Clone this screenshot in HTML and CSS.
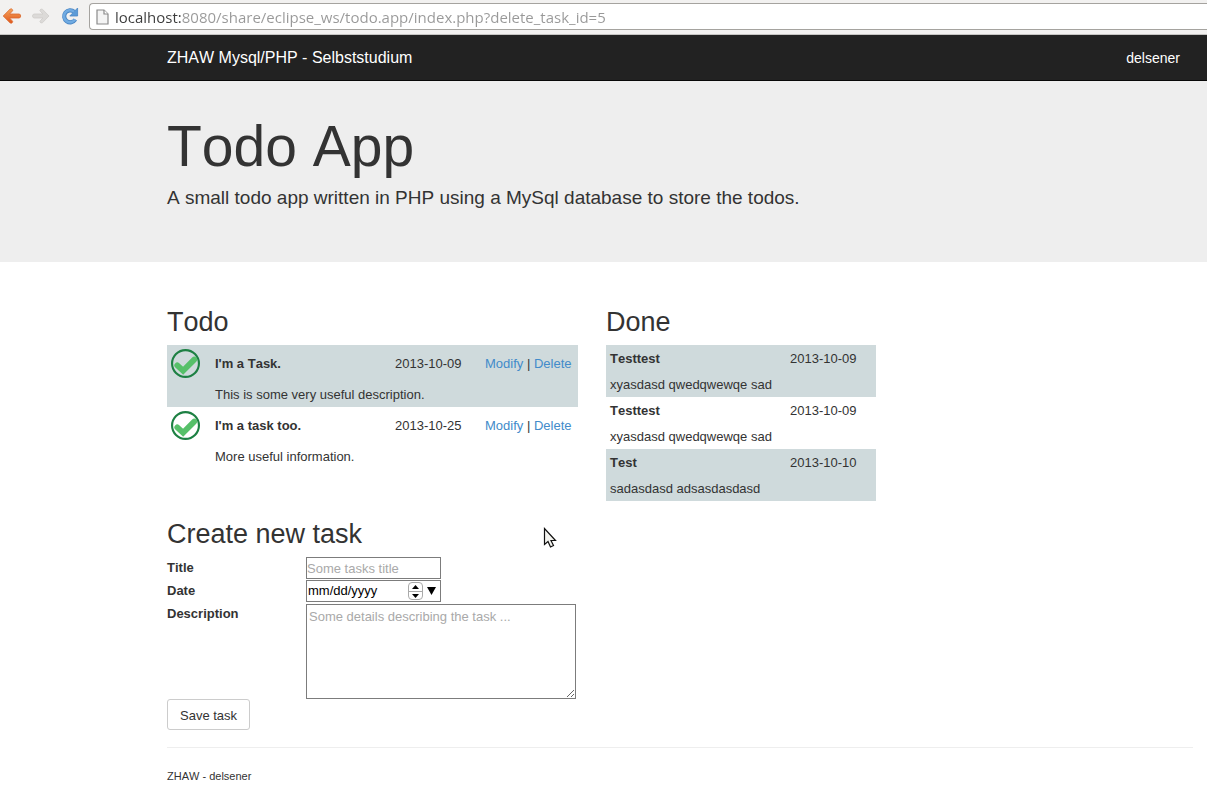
FILE: index.html
```html
<!DOCTYPE html>
<html lang="en">
<head>
<meta charset="utf-8">
<title>Todo App</title>
<link rel="stylesheet" href="styles.css">
</head>
<body>
<div class="toolbar">
  <button class="tool" type="button" aria-label="Back">
    <svg width="20" height="18" viewBox="0 0 20 18"><defs><linearGradient id="orange" x1="0" y1="0" x2="0" y2="1"><stop offset="0" stop-color="#f5a55c"/><stop offset="1" stop-color="#e0561b"/></linearGradient></defs><path d="M8.200 2 1.200 9l7 7q1.700.6 2.400-.8.300-.7-.3-1.300L7.600 11h9.400q1.700-.2 1.700-2t-1.700-2H7.600l2.700-2.900q.6-.6.3-1.300Q9.900 1.400 8.200 2z" fill="url(#orange)" stroke="#d9682d" stroke-width=".8"/></svg>
  </button>
  <button class="tool" type="button" aria-label="Forward">
    <svg width="20" height="18" viewBox="0 0 20 18"><path d="M11.400 2.200 18 9l-6.600 6.800q-1.700.6-2.400-.8-.3-.7.3-1.300L12 11H3.200Q1.500 10.800 1.500 9t1.700-2H12L9.300 4.300Q8.700 3.700 9 3q.7-1.400 2.400-.8z" fill="#dcdad8" stroke="#cfcdca" stroke-width=".8"/></svg>
  </button>
  <button class="tool" type="button" aria-label="Reload">
    <svg width="20" height="18" viewBox="0 0 20 18"><path d="M14.200 4.800A6 6 0 1 0 15.300 12.500" fill="none" stroke="#4a86c4" stroke-width="4.200"/><path d="M17.600 1v8H9.800z" fill="#5b9bd8" stroke="#4a86c4" stroke-width=".8" stroke-linejoin="round"/><path d="M14 4.800A6 6 0 1 0 15.100 12.400" fill="none" stroke="#70abe2" stroke-width="2.600"/></svg>
  </button>
  <div class="address">
    <svg width="13" height="16" viewBox="0 0 13 16"><path d="M1 1h7l4 4v10H1z" fill="#f4f4f4" stroke="#8a8a8a" stroke-width="1.200"/><path d="M8 1v4h4" fill="#fff" stroke="#8a8a8a" stroke-width="1.200"/></svg>
    <input class="url" type="text" aria-label="Address" value="localhost:8080/share/eclipse_ws/todo.app/index.php?delete_task_id=5">
  </div>
</div>
<nav class="navbar">
  <a class="brand" href="#">ZHAW Mysql/PHP - Selbststudium</a>
  <a class="user" href="#">delsener</a>
</nav>
<header class="jumbotron">
  <h1>Todo App</h1>
  <p>A small todo app written in PHP using a MySql database to store the todos.</p>
</header>
<main class="container">
  <div class="lists">
    <section>
      <h2>Todo</h2>
      <table class="tasks open">
        <tbody class="shaded">
          <tr>
            <td class="state"><button class="tick" type="button" aria-label="Mark as done"><svg width="29" height="29" viewBox="0 0 30 30"><circle cx="15" cy="15" r="13.900" fill="none" stroke="#1d8043" stroke-width="2.200"/><path d="M6.500 17l6 5.500L24 11" fill="none" stroke="#56c069" stroke-width="6" stroke-linecap="round"/></svg></button></td>
            <th class="title">I'm a Task.</th>
            <td class="date">2013-10-09</td>
            <td class="actions"><a href="#">Modify</a> | <a href="#">Delete</a></td>
          </tr>
          <tr><td></td><td colspan="3">This is some very useful description.</td></tr>
        </tbody>
        <tbody>
          <tr>
            <td class="state"><button class="tick" type="button" aria-label="Mark as done"><svg width="29" height="29" viewBox="0 0 30 30"><circle cx="15" cy="15" r="13.900" fill="none" stroke="#1d8043" stroke-width="2.200"/><path d="M6.500 17l6 5.500L24 11" fill="none" stroke="#56c069" stroke-width="6" stroke-linecap="round"/></svg></button></td>
            <th class="title">I'm a task too.</th>
            <td class="date">2013-10-25</td>
            <td class="actions"><a href="#">Modify</a> | <a href="#">Delete</a></td>
          </tr>
          <tr><td></td><td colspan="3">More useful information.</td></tr>
        </tbody>
      </table>
    </section>
    <section>
      <h2>Done</h2>
      <table class="tasks">
        <tbody class="shaded">
          <tr><th class="title">Testtest</th><td class="date">2013-10-09</td></tr>
          <tr><td colspan="2">xyasdasd qwedqwewqe sad</td></tr>
        </tbody>
        <tbody>
          <tr><th class="title">Testtest</th><td class="date">2013-10-09</td></tr>
          <tr><td colspan="2">xyasdasd qwedqwewqe sad</td></tr>
        </tbody>
        <tbody class="shaded">
          <tr><th class="title">Test</th><td class="date">2013-10-10</td></tr>
          <tr><td colspan="2">sadasdasd adsasdasdasd</td></tr>
        </tbody>
      </table>
    </section>
  </div>
  <section class="create">
    <h2>Create new task</h2>
    <form>
      <div class="fields">
        <label for="title">Title</label>
        <input class="box" id="title" type="text" placeholder="Some tasks title">
        <label for="date">Date</label>
        <div class="box datebox">
          <input id="date" type="text" value="mm/dd/yyyy">
          <span class="stepper">
            <button type="button" aria-label="Increase"><svg width="7" height="4" viewBox="0 0 7 4"><path d="M0 4 3.500 0 7 4z"/></svg></button>
            <button type="button" aria-label="Decrease"><svg width="7" height="4" viewBox="0 0 7 4"><path d="M0 0 3.500 4 7 0z"/></svg></button>
          </span>
          <button class="open-calendar" type="button" aria-label="Open calendar"><svg width="9" height="8" viewBox="0 0 9 8"><path d="M0 0h9L4.500 8z"/></svg></button>
        </div>
        <label for="description">Description</label>
        <textarea class="box" id="description" placeholder="Some details describing the task ..."></textarea>
      </div>
      <button class="save" type="button">Save task</button>
    </form>
  </section>
  <footer class="footer">ZHAW - delsener</footer>
</main>
<svg class="pointer" width="14" height="22" viewBox="0 0 14 22"><path d="M1.500 1.500v16l3.500-3 2.500 5.500 3-1.500L8 13.500h4.500z" fill="#f4f4f0" stroke="#111" stroke-width="1.200"/></svg>
</body>
</html>
```

FILE: styles.css
```css
* { box-sizing: border-box; }
body {
  margin: 0;
  background: #fff;
  color: #333;
  font: 13px/18px "Liberation Sans", Arial, sans-serif;
  font-kerning: none;
}
button { padding: 0; border: 0; background: none; font: inherit; color: inherit; }
svg { display: block; }
a { color: #428bca; text-decoration: none; }
h1, h2 { margin: 0; font-weight: 400; }

.toolbar {
  display: flex;
  align-items: center;
  gap: 9px;
  height: 35px;
  padding: 0 0 3px 2px;
  background: #f2f1f0;
  border-bottom: 1px solid #c6c5c3;
}
.address {
  flex: 1;
  display: flex;
  align-items: center;
  gap: 6px;
  height: 27px;
  margin-top: 2px;
  padding-left: 6px;
  background: #fff;
  border: 1px solid #a5a39f;
  border-right: 0;
  border-radius: 4px 0 0 4px;
}
.url {
  flex: 1;
  padding: 0;
  border: 0;
  outline: 0;
  font: 15px/20px "Open Sans", "Noto Sans", sans-serif;
  color: transparent;
  background: linear-gradient(to right, #3c3c3c 66px, #989898 66px);
  -webkit-background-clip: text;
  background-clip: text;
}

.navbar {
  display: flex;
  justify-content: space-between;
  align-items: center;
  height: 46px;
  padding: 1px 27px 0 167px;
  background: #222;
  border-bottom: 1px solid #080808;
}
.navbar a { color: #fff; }
.brand { font-size: 16px; }
.user { font-size: 14px; }

.jumbotron {
  padding: 33px 15px 51px 167px;
  background: #eee;
}
.jumbotron h1 { font-size: 57px; line-height: 64px; }
.jumbotron p { margin: 7px 0 0; font-size: 19px; line-height: 26px; }

.container { padding: 45px 14px 0 167px; }
h2 { font-size: 27px; line-height: 30px; padding-bottom: 8px; }
.lists { display: flex; gap: 28px; }

.tasks { border-collapse: collapse; }
.tasks td, .tasks th { padding: 5px 4px 3px; text-align: left; }
.tasks .state { width: 44px; padding-top: 4px; }
.tick { display: block; }
.title { width: 180px; }
.date { width: 90px; }
.actions { width: 97px; white-space: nowrap; }
.shaded { background: #cfdadc; }

.create { padding-top: 18px; }
.fields {
  display: grid;
  grid-template-columns: 139px 270px;
  row-gap: 1px;
}
label { font-weight: 700; padding-top: 2px; }
.box {
  width: 135px;
  height: 22px;
  padding: 1px 0;
  border: 1px solid #7c7c7c;
  background: #fff;
  color: #000;
  font: 13px/18px "Liberation Sans", Arial, sans-serif;
}
.box::placeholder { color: #a9a9a9; }
textarea.box { width: 100%; height: 95px; padding: 3px 2px; margin-top: 1px; }
.datebox { display: flex; align-items: center; gap: 4px; padding: 0 4px 0 1px; }
.datebox input { flex: 1; min-width: 0; padding: 0; border: 0; font: inherit; }
.stepper {
  display: flex;
  flex-direction: column;
  width: 15px;
  border: 1px solid #aaa;
  border-radius: 4px;
}
.stepper button { display: flex; justify-content: center; align-items: center; height: 8px; }
.stepper button + button { border-top: 1px solid #aaa; }
.save {
  display: block;
  padding: 7px 12px 5px;
  border: 1px solid #ccc;
  border-radius: 3px;
  line-height: 17px;
}
.footer {
  margin-top: 17px;
  padding: 19px 0 8px;
  border-top: 1px solid #eee;
  font-size: 11px;
}
.pointer { position: absolute; left: 543px; top: 527px; }
```
